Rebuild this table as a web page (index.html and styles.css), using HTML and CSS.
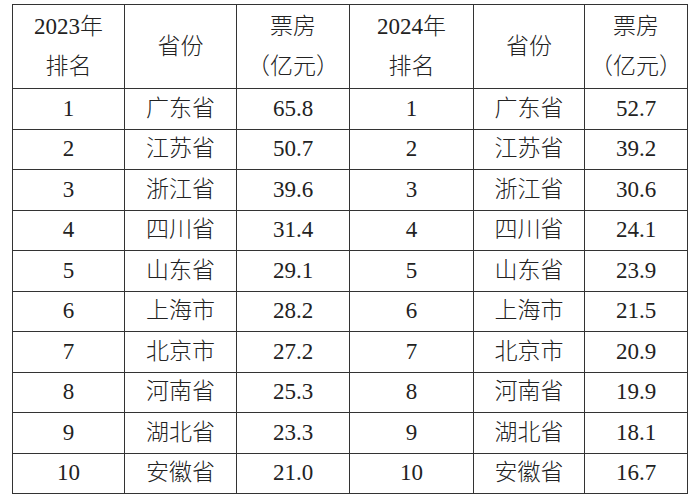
FILE: index.html
```html
<!DOCTYPE html>
<html lang="zh">
<head>
<meta charset="utf-8">
<title>票房排名</title>
<link rel="stylesheet" href="styles.css">
</head>
<body>
<table class="rank">
<colgroup>
<col class="c1"><col class="c2"><col class="c3"><col class="c4"><col class="c5"><col class="c6">
</colgroup>
<thead>
<tr class="head">
<th>2023年<br>排名</th><th>省份</th><th>票房<br>（亿元）</th>
<th>2024年<br>排名</th><th>省份</th><th>票房<br>（亿元）</th>
</tr>
</thead>
<tbody>
<tr><td>1</td><td>广东省</td><td>65.8</td><td>1</td><td>广东省</td><td>52.7</td></tr>
<tr><td>2</td><td>江苏省</td><td>50.7</td><td>2</td><td>江苏省</td><td>39.2</td></tr>
<tr><td>3</td><td>浙江省</td><td>39.6</td><td>3</td><td>浙江省</td><td>30.6</td></tr>
<tr><td>4</td><td>四川省</td><td>31.4</td><td>4</td><td>四川省</td><td>24.1</td></tr>
<tr><td>5</td><td>山东省</td><td>29.1</td><td>5</td><td>山东省</td><td>23.9</td></tr>
<tr><td>6</td><td>上海市</td><td>28.2</td><td>6</td><td>上海市</td><td>21.5</td></tr>
<tr><td>7</td><td>北京市</td><td>27.2</td><td>7</td><td>北京市</td><td>20.9</td></tr>
<tr><td>8</td><td>河南省</td><td>25.3</td><td>8</td><td>河南省</td><td>19.9</td></tr>
<tr><td>9</td><td>湖北省</td><td>23.3</td><td>9</td><td>湖北省</td><td>18.1</td></tr>
<tr><td>10</td><td>安徽省</td><td>21.0</td><td>10</td><td>安徽省</td><td>16.7</td></tr>
</tbody>
</table>
</body>
</html>
```
FILE: styles.css
```css
html, body {
  margin: 0;
  background: #fff;
}
body {
  padding: 4px 0 0 12px;
  font-family: "Liberation Serif", "Noto Sans CJK SC", serif;
  color: #222;
}
.rank {
  border-collapse: collapse;
  table-layout: fixed;
  width: 675px;
  font-size: 23px;
  font-weight: 300;
}
.c1 { width: 112px; }
.c2 { width: 112px; }
.c3 { width: 113px; }
.c4 { width: 124px; }
.c5 { width: 111px; }
.c6 { width: 103px; }
.rank th, .rank td {
  border: 1px solid #333;
  text-align: center;
  vertical-align: middle;
  padding: 0;
  font-weight: 300;
}
.rank .head th {
  height: 83px;
  line-height: 40px;
}
.rank tbody td {
  height: 39.5px;
  line-height: 26px;
}
```
